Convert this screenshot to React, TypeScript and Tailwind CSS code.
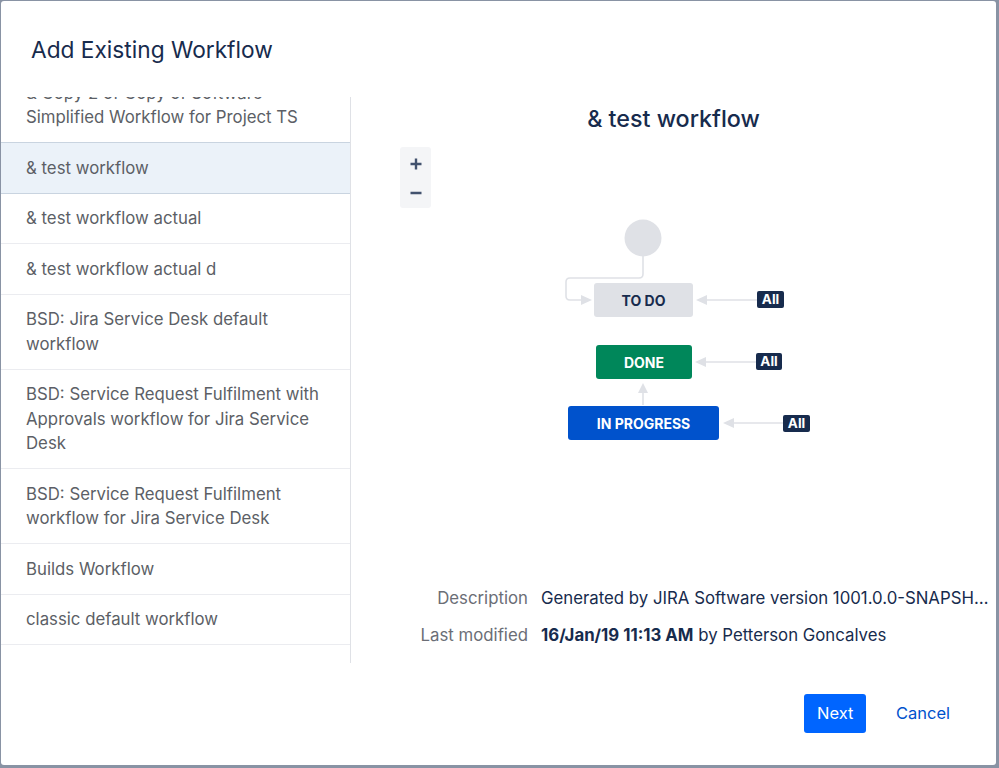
import React from 'react';

const workflows: { name: string; selected?: boolean }[] = [
  { name: '& Copy 2 of Copy of Software Simplified Workflow for Project TS' },
  { name: '& test workflow', selected: true },
  { name: '& test workflow actual' },
  { name: '& test workflow actual d' },
  { name: 'BSD: Jira Service Desk default workflow' },
  { name: 'BSD: Service Request Fulfilment with Approvals workflow for Jira Service Desk' },
  { name: 'BSD: Service Request Fulfilment workflow for Jira Service Desk' },
  { name: 'Builds Workflow' },
  { name: 'classic default workflow' },
];

const font = { fontFamily: 'Inter, "Liberation Sans", Arial, sans-serif' };

function AllTag({ className }: { className: string }) {
  return (
    <div
      className={`absolute flex h-[17px] items-center justify-center rounded-[2px] bg-[#172b4d] text-[13.5px] font-bold leading-none text-white ${className}`}
    >
      All
    </div>
  );
}

function Diagram() {
  const line = '#dfe1e6';
  return (
    <div className="relative mt-[7px] h-[440px] w-full">
      {/* zoom control */}
      <div className="absolute left-[49px] top-[7px] flex h-[61px] w-[31px] flex-col items-center rounded-[3px] bg-[#f4f5f7]">
        <svg className="mt-[11px]" width="12" height="12" viewBox="0 0 12 12">
          <path d="M6 0.5 V11.5 M0.5 6 H11.5" stroke="#42526e" strokeWidth="2.4" />
        </svg>
        <svg className="mt-[21px]" width="12" height="4" viewBox="0 0 12 4">
          <path d="M0.5 2 H11.5" stroke="#42526e" strokeWidth="2.4" />
        </svg>
      </div>

      <svg className="absolute left-0 top-0" width="646" height="440" fill="none">
        <circle cx="292" cy="98" r="18.5" fill={line} />
        <path d="M292 116 V134 Q292 138 288 138 H219 Q215 138 215 142 V156 Q215 160 219 160 H231" stroke={line} strokeWidth="1.6" />
        <path d="M230 155 L241 160 L230 165 Z" fill={line} />

        <path d="M406 160 H355" stroke={line} strokeWidth="1.6" />
        <path d="M356 155 L345 160 L356 165 Z" fill={line} />

        <path d="M405 222 H354" stroke={line} strokeWidth="1.6" />
        <path d="M355 217 L344 222 L355 227 Z" fill={line} />

        <path d="M432 283 H382" stroke={line} strokeWidth="1.6" />
        <path d="M383 278 L372 283 L383 288 Z" fill={line} />

        <path d="M292 265 V252" stroke={line} strokeWidth="1.6" />
        <path d="M287 253 L292 243 L297 253 Z" fill={line} />
      </svg>

      <div className="absolute left-[243px] top-[143px] flex h-[34px] w-[99px] items-center justify-center rounded-[3px] bg-[#dfe1e6] text-[14px] font-bold text-[#172b4d]">
        TO DO
      </div>
      <div className="absolute left-[245px] top-[205px] flex h-[34px] w-[96px] items-center justify-center rounded-[3px] bg-[#00875a] text-[14px] font-bold text-white">
        DONE
      </div>
      <div className="absolute left-[217px] top-[266px] flex h-[34px] w-[151px] items-center justify-center rounded-[3px] bg-[#0052cc] text-[14px] font-bold text-white">
        IN PROGRESS
      </div>

      <AllTag className="left-[406px] top-[151px] w-[27px]" />
      <AllTag className="left-[405px] top-[213px] w-[26px]" />
      <AllTag className="left-[432px] top-[275px] w-[27px]" />
    </div>
  );
}

export default function App() {
  return (
    <div className="h-[768px] w-[999px] bg-[#8993a4] pb-[3px] pl-[1px] pr-[3px] pt-[1px]" style={font}>
      <div className="flex h-full w-full flex-col overflow-hidden rounded-[3px] bg-white">
        <div className="h-[96px] shrink-0 pl-[30px] pt-[35px]">
          <h1 className="text-[22.7px] leading-[28px] text-[#172b4d]">Add Existing Workflow</h1>
        </div>

        <div className="flex">
          <div className="h-[566px] w-[350px] shrink-0 overflow-hidden border-r border-[#dfe1e6]">
            <ul className="-mt-[29px]">
              {workflows.map(w => (
                <li
                  key={w.name}
                  className={`border-b py-[12.5px] pl-[25px] pr-[24px] text-[16.8px] leading-[24.5px] text-[#5c5f66] ${
                    w.selected ? 'border-t border-[#c9d4e0] bg-[#ebf2f9] -mt-px' : 'border-[#ebecf0]'
                  }`}
                >
                  {w.name}
                </li>
              ))}
            </ul>
          </div>

          <div className="flex min-w-0 flex-1 flex-col">
            <h2 className="pt-[8px] text-center text-[23.3px] font-medium leading-[28px] text-[#172b4d]">
              &amp; test workflow
            </h2>
            <Diagram />
            <div className="mt-[6px] grid grid-cols-[177px_1fr] gap-x-[13px] gap-y-[13px] pr-[6px] text-[16.8px] leading-[24px]">
              <span className="text-right text-[#6b6e76]">Description</span>
              <span className="truncate text-[#172b4d]">Generated by JIRA Software version 1001.0.0-SNAPSHOT</span>
              <span className="text-right text-[#6b6e76]">Last modified</span>
              <span className="truncate text-[#172b4d]">
                <b className="font-bold">16/Jan/19 11:13 AM</b> by Petterson Goncalves
              </span>
            </div>
          </div>
        </div>

        <div className="flex justify-end pr-[34px] pt-[31px]">
          <button className="h-[39px] rounded-[3px] bg-[#0065ff] px-[12.5px] text-[16.5px] text-white">Next</button>
          <button className="ml-[18px] h-[39px] px-[12px] text-[16.5px] text-[#0052cc]">Cancel</button>
        </div>
      </div>
    </div>
  );
}
